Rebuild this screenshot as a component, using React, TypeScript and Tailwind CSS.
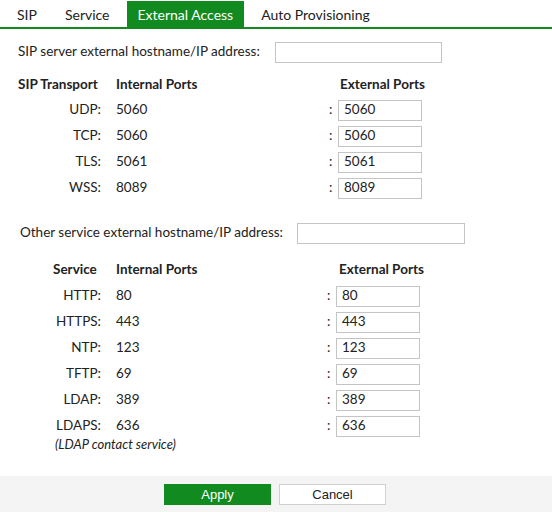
const sipRows = [
  { name: "UDP:", port: "5060" },
  { name: "TCP:", port: "5060" },
  { name: "TLS:", port: "5061" },
  { name: "WSS:", port: "8089" },
];

const serviceRows = [
  { name: "HTTP:", port: "80" },
  { name: "HTTPS:", port: "443" },
  { name: "NTP:", port: "123" },
  { name: "TFTP:", port: "69" },
  { name: "LDAP:", port: "389" },
  { name: "LDAPS:", port: "636" },
];

function Tabs() {
  const tabs = ["SIP", "Service", "External Access", "Auto Provisioning"];
  return (
    <div className="flex items-end h-[29px] border-b-2 border-[#118a1f] pl-[6px] gap-[6px] text-[14px]">
      {tabs.map((t) =>
        t === "External Access" ? (
          <div key={t} className="h-[26px] px-[11px] pt-[2px] flex items-center bg-[#118a1f] text-white">
            {t}
          </div>
        ) : (
          <div key={t} className="h-[26px] px-[11px] pt-[2px] flex items-center text-[#222]">
            {t}
          </div>
        )
      )}
    </div>
  );
}

function PortRow({ name, port, wide }: { name: string; port: string; wide: boolean }) {
  return (
    <div className="flex items-center h-[26px]">
      <div className="w-[102px] text-right pr-[1px]">{name}</div>
      <div className="ml-[14px] flex-1">{port}</div>
      <div className={wide ? "w-[223px] flex items-center" : "w-[225px] flex items-center"}>
        <span className="w-[9px]">:</span>
        <div className="w-[84px] h-[21px] border border-[#c4c4c4] pl-[5px] flex items-center">{port}</div>
      </div>
    </div>
  );
}

export default function App() {
  return (
    <div className="w-[552px] h-[512px] bg-white flex flex-col font-['Lato','Open_Sans',sans-serif] text-[13.5px] text-[#222] leading-none">
      <Tabs />

      <div className="flex-1 flex flex-col">
        <div className="flex items-center mt-[13px] pl-[18px] h-[20px]">
          <span>SIP server external hostname/IP address:</span>
          <div className="ml-[15px] w-[167px] h-[21px] border border-[#c4c4c4]" />
        </div>

        <div className="flex items-center mt-[14px] h-[18px] font-bold">
          <div className="pl-[18px] w-[116px]">SIP Transport</div>
          <div className="flex-1">Internal Ports</div>
          <div className="w-[212px]">External Ports</div>
        </div>

        <div className="mt-[3px] flex flex-col">
          {sipRows.map((r) => (
            <PortRow key={r.name} name={r.name} port={r.port} wide />
          ))}
        </div>

        <div className="flex items-center mt-[22px] pl-[20px] h-[20px]">
          <span>Other service external hostname/IP address:</span>
          <div className="ml-[14px] w-[168px] h-[21px] border border-[#c4c4c4]" />
        </div>

        <div className="flex items-center mt-[18px] h-[18px] font-bold">
          <div className="pl-[53px] w-[116px]">Service</div>
          <div className="flex-1">Internal Ports</div>
          <div className="w-[213px]">External Ports</div>
        </div>

        <div className="mt-[4px] flex flex-col">
          {serviceRows.map((r) => (
            <PortRow key={r.name} name={r.name} port={r.port} wide={false} />
          ))}
        </div>

        <div className="pl-[55px] mt-[-1px] text-[13px] italic">(LDAP contact service)</div>
      </div>

      <div className="h-[36px] bg-[#f4f4f4] flex items-center justify-center gap-[8px] pr-[2px] font-['Liberation_Sans',Arial,sans-serif]">
        <button className="w-[107px] h-[21px] bg-[#118a1f] text-white text-[13px]">Apply</button>
        <button className="w-[107px] h-[21px] bg-white border border-[#d0d0d0] text-[13px] text-[#222]">Cancel</button>
      </div>
    </div>
  );
}
